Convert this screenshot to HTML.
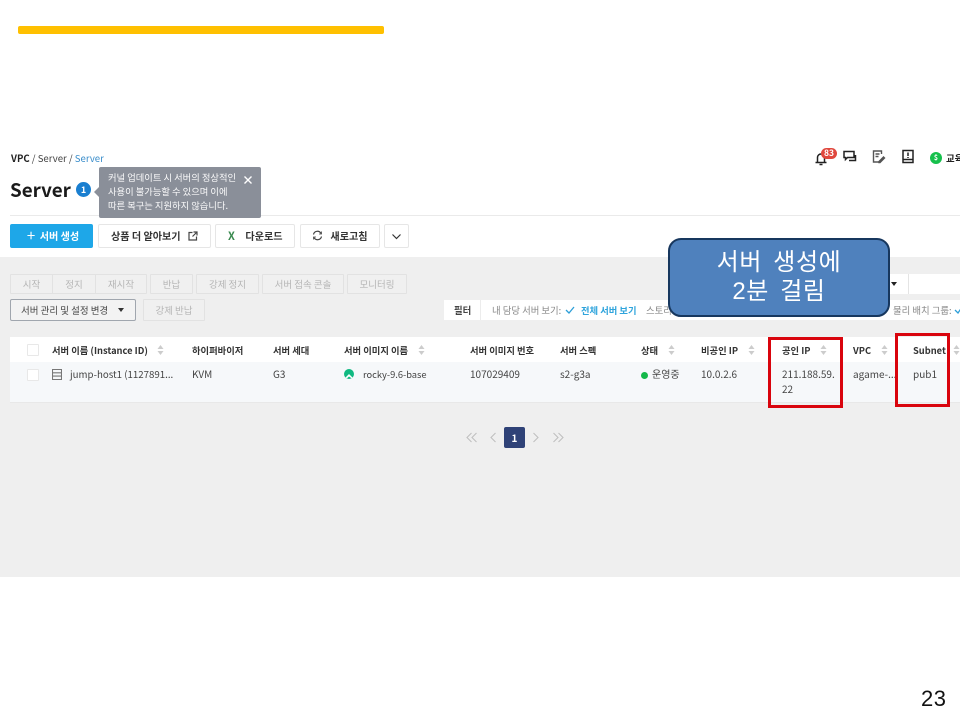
<!DOCTYPE html>
<html><head><meta charset="utf-8"><style>
html,body{margin:0;padding:0;background:#fff}
#p{position:relative;width:960px;height:720px;overflow:hidden;background:#fff;font-family:"Noto Sans CJK KR","Liberation Sans",sans-serif;color:#333;filter:blur(.35px)}
#p div,#p svg{position:absolute}
.t{white-space:nowrap;font-size:9.4px;line-height:14px}
.h{white-space:nowrap;font-size:9.3px;line-height:14px;font-weight:700;color:#333;top:343px}
.c{white-space:nowrap;font-size:10px;line-height:14px;color:#444;top:367px}
.b{box-sizing:border-box;background:#fff;border:1px solid #e6e6e6;border-radius:2px;top:224px;height:24px;font-size:10.1px;font-weight:700;line-height:22px;color:#333;text-align:center;white-space:nowrap}
.d{box-sizing:border-box;background:#f0f0f0;border:1px solid #e2e2e2;top:274px;height:20px;font-size:9.5px;line-height:18px;color:#b5b5b5;text-align:center;white-space:nowrap;border-radius:1px}
.cb{box-sizing:border-box;width:12px;height:12px;left:27px;background:#fff;border:1px solid #e8e8e8;border-radius:1px}
.r{box-sizing:border-box;border:3.5px solid #d9040d}
</style></head><body><div id="p">
<div style="left:18px;top:26px;width:366px;height:8px;background:#ffc000;border-radius:2px"></div>

<div style="left:0;top:257px;width:960px;height:320px;background:#efefef"></div>
<div style="left:10px;top:214.5px;width:950px;height:1px;background:#eaeaea"></div>

<div class="t" style="left:11px;top:151px;font-size:9.6px;color:#444"><b style="color:#222">VPC</b> / Server / <span style="color:#3b8ecb">Server</span></div>
<div class="t" style="left:10px;top:178px;font-size:18.8px;line-height:23px;font-weight:700;color:#1a1a1a">Server</div>
<div style="left:76px;top:182px;width:15px;height:15px;border-radius:50%;background:#1a7fd0;color:#fff;font-size:9px;font-weight:700;line-height:15px;text-align:center">1</div>
<div style="left:94px;top:187px;width:0;height:0;border:5px solid transparent;border-left:0;border-right-color:#8a8f99"></div>
<div style="left:99px;top:167px;width:162px;height:51px;background:#8a8f99;border-radius:2px"></div>
<div class="t" style="left:108px;top:170px;color:#fff;font-size:9.3px;line-height:14px;opacity:.96">커널 업데이트 시 서버의 정상적인<br>사용이 불가능할 수 있으며 이에<br>따른 복구는 지원하지 않습니다.</div>
<svg style="left:243px;top:175px" width="10" height="10" viewBox="0 0 10 10"><path d="M1.5 1.5l7 7M8.5 1.5l-7 7" stroke="#fff" stroke-width="1.4"/></svg>

<!-- top icons -->
<svg style="left:813px;top:150px" width="16" height="16" viewBox="0 0 16 16" fill="none" stroke="#222" stroke-width="1.5"><path d="M2.500 12.500h11M4.500 12.500V7.500a3.500 3.500 0 0 1 7 0v5M6.500 14.500h3"/></svg>
<div style="left:821px;top:147.5px;width:16px;height:11px;border-radius:6px;background:#e0483e;color:#fff;font-size:8.5px;font-weight:700;line-height:11px;text-align:center">83</div>
<svg style="left:842px;top:149px" width="15" height="15" viewBox="0 0 15 15" fill="none" stroke="#222" stroke-width="1.500"><path d="M2 2.500h10v6H5.500L3.500 10.500V8.500H2zM7 11.500h6.500V6"/></svg>
<svg style="left:871px;top:149px" width="15" height="15" viewBox="0 0 15 15" fill="none" stroke="#555" stroke-width="1.400"><path d="M10.500 5V2h-8v11h5M4.500 5h4M4.500 7.500h3"/><path d="M8 12.500l4.500-4.500 1 1-4.500 4.500H8z" fill="#444"/></svg>
<svg style="left:901px;top:149px" width="14" height="15" viewBox="0 0 14 15" fill="none" stroke="#222" stroke-width="1.500"><path d="M2 1.500h10v12H2zM2 10.500h10"/><path d="M7 3.500v3.500M7 8v1" stroke-width="1.500"/></svg>
<div style="left:930px;top:152px;width:12px;height:12px;border-radius:50%;background:#16c04c;color:#fff;font-size:7px;font-weight:700;line-height:12px;text-align:center">$</div>
<div class="t" style="left:946px;top:151px;font-weight:700;color:#222">교육</div>

<!-- action buttons -->
<div class="b" style="left:10px;width:83px;background:#1ea7e8;border-color:#1ea7e8;color:#fff;padding-left:3px"><span style="font-size:15px;font-weight:400;vertical-align:-1px">+</span>&nbsp; 서버 생성</div>
<div class="b" style="left:98px;width:113px;text-align:left;padding-left:12px">상품 더 알아보기</div>
<svg style="left:188px;top:231px" width="10" height="10" viewBox="0 0 10 10" fill="none" stroke="#444" stroke-width="1.200"><path d="M4.500 1.500H1v7.500h7.500V5.500M5.500 1H9v3.500M9 1L4.500 5.500"/></svg>
<div class="b" style="left:215px;width:80px;padding-left:18px">다운로드</div>
<div class="t" style="left:228px;top:229px;font-size:11px;font-weight:700;color:#3a8a50">X</div>
<div class="b" style="left:300px;width:80px;padding-left:18px">새로고침</div>
<svg style="left:312px;top:230px" width="11" height="11" viewBox="0 0 11 11" fill="none" stroke="#444" stroke-width="1.200"><path d="M1.500 4.500a4 4 0 0 1 7.500-1M9.500 6.500a4 4 0 0 1-7.500 1"/><path d="M9.500 1.500v2.500H7M1.500 9.500V7H4" stroke-width=".8"/></svg>
<div class="b" style="left:384px;width:25px"></div>
<svg style="left:391px;top:233px" width="11" height="7" viewBox="0 0 11 7" fill="none" stroke="#333" stroke-width="1.200"><path d="M1.500 1.500l4 4 4-4"/></svg>

<!-- disabled buttons -->
<div class="d" style="left:10px;width:43px">시작</div>
<div class="d" style="left:52px;width:44px">정지</div>
<div class="d" style="left:95px;width:52px">재시작</div>
<div class="d" style="left:150px;width:43px">반납</div>
<div class="d" style="left:196px;width:63px">강제 정지</div>
<div class="d" style="left:262px;width:82px">서버 접속 콘솔</div>
<div class="d" style="left:347px;width:60px">모니터링</div>
<div class="d" style="left:10px;top:299px;width:126px;height:22px;border:1px solid #a0a6ae;background:#f3f3f3;color:#444;line-height:20px;font-size:9.5px;text-align:left;padding-left:10px;border-radius:2px">서버 관리 및 설정 변경</div>
<div style="left:118px;top:308px;width:0;height:0;border:3.500px solid transparent;border-top:4px solid #333;border-bottom:0"></div>
<div class="d" style="left:143px;top:299px;width:62px;height:22px;line-height:20px">강제 반납</div>

<!-- filter row -->
<div style="left:444px;top:300px;width:516px;height:20px;background:#fff"></div>
<div style="left:480px;top:300px;width:1px;height:20px;background:#ececec"></div>
<div class="t" style="left:454px;top:303px;font-weight:700;color:#444">필터</div>
<div class="t" style="left:492px;top:303px;color:#888">내 담당 서버 보기:</div>
<svg style="left:565px;top:306px" width="10" height="8" viewBox="0 0 10 8" fill="none" stroke="#2d9fd8" stroke-width="1.300"><path d="M1 4l3 3 5-6"/></svg>
<div class="t" style="left:581px;top:303px;color:#2fa4dc;font-weight:700;font-size:9.3px">전체 서버 보기</div>
<div class="t" style="left:646px;top:303px;color:#888">스토리지</div>
<div class="t" style="left:893px;top:303px;color:#888">물리 배치 그룹:</div>
<svg style="left:954px;top:306px" width="8" height="8" viewBox="0 0 8 8" fill="none" stroke="#2d9fd8" stroke-width="1.300"><path d="M1 4l3 3 4-6"/></svg>

<!-- search -->
<div style="left:880px;top:274px;width:28px;height:20px;background:#fff"></div>
<div style="left:908px;top:274px;width:52px;height:20px;background:#fff;border-left:1px solid #e4e4e4"></div>
<div style="left:891px;top:282px;width:0;height:0;border:3px solid transparent;border-top:4px solid #222;border-bottom:0"></div>

<!-- table -->
<div style="left:10px;top:337px;width:950px;height:25px;background:#fff"></div>
<div style="left:10px;top:362px;width:950px;height:40px;background:#f6f8fa;border-bottom:1px solid #e8e8e8"></div>
<div class="cb" style="top:344px"></div>
<div class="cb" style="top:369px"></div>

<div class="h" style="left:52px">서버 이름 (Instance ID)</div>
<div class="h" style="left:192px">하이퍼바이저</div>
<div class="h" style="left:273px">서버 세대</div>
<div class="h" style="left:344px">서버 이미지 이름</div>
<div class="h" style="left:470px">서버 이미지 번호</div>
<div class="h" style="left:560px">서버 스펙</div>
<div class="h" style="left:641px">상태</div>
<div class="h" style="left:701px">비공인 IP</div>
<div class="h" style="left:782px">공인 IP</div>
<div class="h" style="left:853px">VPC</div>
<div class="h" style="left:913px">Subnet</div>

<svg style="left:157px;top:345px" width="7" height="10" viewBox="0 0 7 10" fill="#ccc"><path d="M3.500 0L6.500 4H.5zM3.500 10L.5 6h6z"/></svg>
<svg style="left:418px;top:345px" width="7" height="10" viewBox="0 0 7 10" fill="#ccc"><path d="M3.500 0L6.500 4H.5zM3.500 10L.5 6h6z"/></svg>
<svg style="left:668px;top:345px" width="7" height="10" viewBox="0 0 7 10" fill="#ccc"><path d="M3.500 0L6.500 4H.5zM3.500 10L.5 6h6z"/></svg>
<svg style="left:748px;top:345px" width="7" height="10" viewBox="0 0 7 10" fill="#ccc"><path d="M3.500 0L6.500 4H.5zM3.500 10L.5 6h6z"/></svg>
<svg style="left:820px;top:345px" width="7" height="10" viewBox="0 0 7 10" fill="#ccc"><path d="M3.500 0L6.500 4H.5zM3.500 10L.5 6h6z"/></svg>
<svg style="left:881px;top:345px" width="7" height="10" viewBox="0 0 7 10" fill="#ccc"><path d="M3.500 0L6.500 4H.5zM3.500 10L.5 6h6z"/></svg>
<svg style="left:953px;top:345px" width="7" height="10" viewBox="0 0 7 10" fill="#ccc"><path d="M3.500 0L6.500 4H.5zM3.500 10L.5 6h6z"/></svg>

<svg style="left:52px;top:369px" width="10" height="11" viewBox="0 0 10 11" fill="none" stroke="#777" stroke-width="1.100"><path d="M.5.500h9v10h-9zM.5 3.800h9M.5 7.100h9"/></svg>
<div class="c" style="left:70px;font-size:9.7px">jump-host1 (1127891...</div>
<div class="c" style="left:192px">KVM</div>
<div class="c" style="left:273px">G3</div>
<svg style="left:344px;top:369px" width="10" height="10" viewBox="0 0 10 10"><circle cx="5" cy="5" r="5" fill="#10b981"/><path d="M1.500 8.500L5 5l3.500 3.500-1 .8L5 7.500 3 9.300z" fill="#fff"/></svg>
<div class="c" style="left:363px;font-size:9.3px">rocky-9.6-base</div>
<div class="c" style="left:470px">107029409</div>
<div class="c" style="left:560px">s2-g3a</div>
<div style="left:641px;top:372px;width:7px;height:7px;border-radius:50%;background:#14b84a"></div>
<div class="c" style="left:652px">운영중</div>
<div class="c" style="left:701px">10.0.2.6</div>
<div class="c" style="left:782px">211.188.59.</div>
<div class="c" style="left:782px;top:382px">22</div>
<div class="c" style="left:853px">agame-...</div>
<div class="c" style="left:913px">pub1</div>

<!-- red boxes -->
<div class="r" style="left:768px;top:337px;width:75px;height:71px"></div>
<div class="r" style="left:895px;top:333px;width:55px;height:74px"></div>

<!-- pagination -->
<svg style="left:466px;top:432px" width="12" height="11" viewBox="0 0 12 11" fill="none" stroke="#c0c0c0" stroke-width="1.100"><path d="M5.500 1L1 5.500 5.500 10M10.500 1L6 5.500 10.500 10"/></svg>
<svg style="left:489px;top:432px" width="8" height="11" viewBox="0 0 8 11" fill="none" stroke="#c0c0c0" stroke-width="1.100"><path d="M6.500 1L2 5.500 6.500 10"/></svg>
<div style="left:504px;top:427px;width:21px;height:21px;border-radius:2px;background:#2f4277;color:#fff;font-size:10px;font-weight:700;line-height:21px;text-align:center">1</div>
<svg style="left:532px;top:432px" width="8" height="11" viewBox="0 0 8 11" fill="none" stroke="#c0c0c0" stroke-width="1.100"><path d="M1.500 1L6 5.500 1.500 10"/></svg>
<svg style="left:552px;top:432px" width="12" height="11" viewBox="0 0 12 11" fill="none" stroke="#c0c0c0" stroke-width="1.100"><path d="M1.500 1L6 5.500 1.500 10M6.500 1L11 5.500 6.500 10"/></svg>

<!-- callout -->
<div style="box-sizing:border-box;left:668px;top:238px;width:222px;height:79px;background:#4f81bd;border:2.500px solid #17375e;border-radius:13px"></div>
<div class="t" style="left:668px;top:248px;width:222px;text-align:center;color:#fff;font-size:24px;line-height:29px;letter-spacing:.6px;font-family:'Liberation Sans','WenQuanYi Zen Hei',sans-serif;word-spacing:4px">서버 생성에<br>2분 걸림</div>

<div class="t" style="left:921px;top:687px;font-size:22px;line-height:24px;color:#111;font-family:'Liberation Sans',sans-serif;letter-spacing:.5px">23</div>
</div></body></html>
